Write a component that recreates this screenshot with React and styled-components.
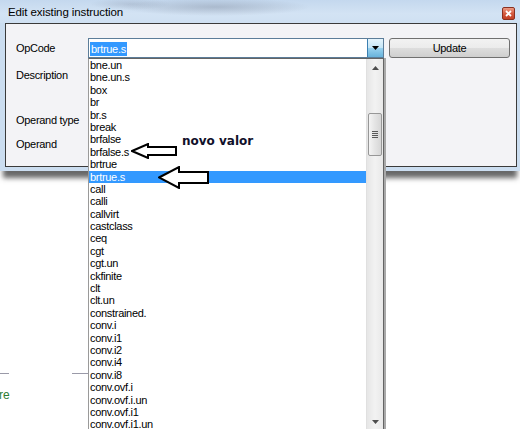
import React from "react";
import styled, { createGlobalStyle } from "styled-components";

const GlobalStyle = createGlobalStyle`
  html, body {
    margin: 0;
    padding: 0;
    background: #fff;
  }
  body {
    font-family: "Liberation Sans", Arial, sans-serif;
  }
`;

const Screen = styled.div`
  position: relative;
  width: 520px;
  height: 429px;
  overflow: hidden;
  background: #fff;
`;

const Window = styled.div`
  position: absolute;
  left: 0;
  top: 0;
  width: 520px;
  display: flex;
  flex-direction: column;
  padding-bottom: 4px;
  box-sizing: border-box;
  background: #cbddf0;
  box-shadow: 0 10px 5px -3px rgba(40, 40, 40, 0.7);
`;

const TitleBar = styled.div`
  height: 23px;
  display: flex;
  align-items: center;
  justify-content: space-between;
  padding: 0 5px 0 8px;
  background:
    radial-gradient(ellipse 95px 9px at 215px 7px, rgba(110, 120, 140, 0.35), transparent),
    radial-gradient(ellipse 40px 6px at 130px 4px, rgba(120, 130, 150, 0.25), transparent),
    linear-gradient(180deg, #c4d8ee 0%, #d3e3f4 60%, #cfe0f2 100%);
`;

const Title = styled.span`
  font-size: 11.5px;
  color: #000;
  letter-spacing: -0.1px;
`;

const CloseButton = styled.div`
  width: 13px;
  height: 13px;
  margin-top: 4px;
  box-sizing: border-box;
  border: 1px solid #8a3020;
  border-radius: 2px;
  background: linear-gradient(180deg, #ec9b84 0%, #d55b40 50%, #c23f24 100%);
  display: flex;
  align-items: center;
  justify-content: center;
`;

const Client = styled.div`
  margin: 0 3px 0 5px;
  border: 1px solid #3a3a3a;
  background: #f3f3f6;
  padding: 14px 5px 12px 10px;
`;

const Form = styled.div`
  display: grid;
  grid-template-columns: 67px 296px 121px;
  grid-template-rows: 20px 44px 20px 20px;
  column-gap: 5px;
  row-gap: 4px;
`;

const Label = styled.div`
  grid-column: 1;
  font-size: 11px;
  letter-spacing: -0.3px;
  color: #000;
  white-space: nowrap;
  display: flex;
  align-items: ${(p) => (p.$top ? "flex-start" : "center")};
  padding-top: ${(p) => (p.$top ? "7px" : "0")};
`;

const Combo = styled.div`
  grid-column: 2;
  display: flex;
  align-items: center;
  box-sizing: border-box;
  border: 1px solid #5c7d99;
  background: #fff;
  padding-left: 1px;
`;

const ComboText = styled.span`
  flex: 1;
`;

const Selected = styled.span`
  display: inline-block;
  background: #3399ff;
  color: #fff;
  font-size: 11px;
  letter-spacing: -0.3px;
  line-height: 14px;
  padding: 0 1px;
`;

const ComboButton = styled.div`
  width: 16px;
  height: 18px;
  box-sizing: border-box;
  border-left: 1px solid #3c7fb1;
  background: linear-gradient(180deg, #e5f4fc 0%, #c4e5f6 50%, #98d1ef 51%, #68b3db 100%);
  display: flex;
  align-items: center;
  justify-content: center;
`;

const UpdateButton = styled.div`
  grid-column: 3;
  height: 20px;
  box-sizing: border-box;
  border: 1px solid #707070;
  border-radius: 3px;
  background: linear-gradient(180deg, #f2f2f2 0%, #ebebeb 50%, #dddddd 51%, #cfcfcf 100%);
  font-size: 11px;
  letter-spacing: -0.3px;
  color: #000;
  display: flex;
  align-items: center;
  justify-content: center;
`;

const DropList = styled.div`
  position: absolute;
  left: 88px;
  top: 58px;
  width: 296px;
  height: 373px;
  box-sizing: border-box;
  border: 1px solid #646464;
  border-left-color: #9a9a9a;
  background: #fff;
  display: flex;
  box-shadow: 2px 0 0 #a9a9a9;
`;

const Items = styled.div`
  flex: 1;
  display: flex;
  flex-direction: column;
`;

const Item = styled.div`
  height: 12.4px;
  line-height: 12.4px;
  padding-left: 1px;
  font-size: 11px;
  letter-spacing: -0.3px;
  color: ${(p) => (p.$active ? "#fff" : "#000")};
  background: ${(p) => (p.$active ? "#3399ff" : "transparent")};
  white-space: nowrap;
`;

const ScrollBar = styled.div`
  width: 16px;
  display: flex;
  flex-direction: column;
  background: linear-gradient(90deg, #e6e6e6, #f2f2f2 50%, #e8e8e8);
  border-left: 1px solid #e0e0e0;
`;

const ScrollArrow = styled.div`
  height: 17px;
  display: flex;
  align-items: center;
  justify-content: center;
`;

const ScrollTrack = styled.div`
  flex: 1;
  padding-top: 37px;
`;

const Thumb = styled.div`
  width: 14px;
  height: 43px;
  margin-left: 1px;
  box-sizing: border-box;
  border: 1px solid #979797;
  border-radius: 2px;
  background: linear-gradient(90deg, #f4f4f4, #e4e4e4 50%, #d6d6d6);
  display: flex;
  flex-direction: column;
  align-items: center;
  justify-content: center;
  gap: 1px;
`;

const Grip = styled.span`
  width: 6px;
  height: 1px;
  background: #5a5a5a;
`;

const Annotation = styled.div`
  position: absolute;
  left: ${(p) => p.$x}px;
  top: ${(p) => p.$y}px;
  line-height: 0;
`;

const NoteText = styled.span`
  position: absolute;
  left: 182px;
  top: 134px;
  font-family: "DejaVu Sans", Verdana, sans-serif;
  font-weight: bold;
  font-size: 12px;
  color: #10102a;
`;

const StrayLine = styled.div`
  position: absolute;
  top: 373px;
  left: ${(p) => p.$x}px;
  width: ${(p) => p.$w}px;
  height: 1px;
  background: #9a9aa8;
`;

const StrayText = styled.span`
  position: absolute;
  left: -1px;
  top: 388px;
  font-size: 12px;
  color: #2e7d32;
`;

const opcodes = [
  "bne.un",
  "bne.un.s",
  "box",
  "br",
  "br.s",
  "break",
  "brfalse",
  "brfalse.s",
  "brtrue",
  "brtrue.s",
  "call",
  "calli",
  "callvirt",
  "castclass",
  "ceq",
  "cgt",
  "cgt.un",
  "ckfinite",
  "clt",
  "clt.un",
  "constrained.",
  "conv.i",
  "conv.i1",
  "conv.i2",
  "conv.i4",
  "conv.i8",
  "conv.ovf.i",
  "conv.ovf.i.un",
  "conv.ovf.i1",
  "conv.ovf.i1.un",
];

function LeftArrow({ w, h, head, shaftTop, shaftBottom }) {
  const d = `M1 ${h / 2} L${head} 1 L${head} ${shaftTop} L${w - 1} ${shaftTop} L${w - 1} ${shaftBottom} L${head} ${shaftBottom} L${head} ${h - 1} Z`;
  return (
    <svg width={w} height={h} viewBox={`0 0 ${w} ${h}`}>
      <path d={d} fill="#fff" stroke="#000" strokeWidth="2" strokeLinejoin="miter" />
    </svg>
  );
}

export default function App() {
  return (
    <>
      <GlobalStyle />
      <Screen>
        <StrayLine $x={0} $w={9} />
        <StrayLine $x={72} $w={16} />
        <StrayText>re</StrayText>

        <Window>
          <TitleBar>
            <Title>Edit existing instruction</Title>
            <CloseButton>
              <svg width="7" height="7" viewBox="0 0 7 7">
                <path d="M1 1 L6 6 M6 1 L1 6" stroke="#fff" strokeWidth="1.8" />
              </svg>
            </CloseButton>
          </TitleBar>
          <Client>
            <Form>
              <Label>OpCode</Label>
              <Combo>
                <ComboText>
                  <Selected>brtrue.s</Selected>
                </ComboText>
                <ComboButton>
                  <svg width="7" height="4" viewBox="0 0 7 4">
                    <path d="M0 0 L7 0 L3.5 4 Z" fill="#000" />
                  </svg>
                </ComboButton>
              </Combo>
              <UpdateButton>Update</UpdateButton>
              <Label $top>Description</Label>
              <Label>Operand type</Label>
              <Label>Operand</Label>
            </Form>
          </Client>
        </Window>

        <DropList>
          <Items>
            {opcodes.map((op) => (
              <Item key={op} $active={op === "brtrue.s"}>
                {op}
              </Item>
            ))}
          </Items>
          <ScrollBar>
            <ScrollArrow>
              <svg width="7" height="4" viewBox="0 0 7 4">
                <path d="M0 4 L7 4 L3.5 0 Z" fill="#4d4d4d" />
              </svg>
            </ScrollArrow>
            <ScrollTrack>
              <Thumb>
                <Grip />
                <Grip />
                <Grip />
                <Grip />
              </Thumb>
            </ScrollTrack>
            <ScrollArrow>
              <svg width="7" height="4" viewBox="0 0 7 4">
                <path d="M0 0 L7 0 L3.5 4 Z" fill="#4d4d4d" />
              </svg>
            </ScrollArrow>
          </ScrollBar>
        </DropList>

        <NoteText>novo valor</NoteText>
        <Annotation $x={131} $y={143}>
          <LeftArrow w={46} h={16} head={17} shaftTop={4} shaftBottom={12} />
        </Annotation>
        <Annotation $x={158} $y={166}>
          <LeftArrow w={51} h={23} head={21} shaftTop={6} shaftBottom={17} />
        </Annotation>
      </Screen>
    </>
  );
}
